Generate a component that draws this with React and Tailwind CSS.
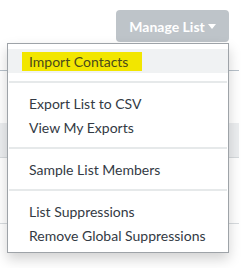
import React from 'react'

const groups = [
  ['Import Contacts'],
  ['Export List to CSV', 'View My Exports'],
  ['Sample List Members'],
  ['List Suppressions', 'Remove Global Suppressions'],
]

function Caret() {
  return (
    <svg width="8" height="5" viewBox="0 0 8 5" className="ml-[3px] mt-[1px]" aria-hidden="true">
      <path d="M0 0h8L4 5z" fill="currentColor" />
    </svg>
  )
}

export default function App() {
  return (
    <div
      className="relative w-[241px] h-[268px] bg-white overflow-hidden"
      style={{ fontFamily: 'Lato, "Open Sans", sans-serif' }}
    >
      <div className="flex justify-end pt-[10px] pr-[12px]">
        <button className="flex items-center justify-center w-[113px] h-[32px] rounded-[4px] bg-[#bec4c9] text-white text-[14px] font-bold">
          Manage List
          <Caret />
        </button>
      </div>

      {/* table rows behind the menu */}
      <div className="mt-[28px] mr-[2px]">
        <div className="h-px bg-[#b7c1ca]" />
        <div className="h-[52px]" />
        <div className="h-[35px] bg-[#eceef0] border-b border-[#d6dadd]" />
        <div className="h-[65px]" />
        <div className="h-px bg-[#d8dcdf]" />
      </div>

      <div className="absolute left-[7px] top-[43px] w-[222px] bg-white border border-[#9ea3a8] shadow-[0_6px_12px_rgba(0,0,0,0.18)] py-[5px] text-[14px] text-[#333a44]">
        {groups.map((items, gi) => (
          <div key={gi}>
            {gi > 0 && <div className="h-[2px] mx-[1px] my-[8px] bg-[#e6e9ea]" />}
            {items.map((label) =>
              label === 'Import Contacts' ? (
                <div key={label} className="h-[24px] flex items-center pl-[14px] bg-[#f0f2f3]">
                  <span className="inline-flex items-center h-[19px] pl-[7px] pr-[14px] bg-[#f2e600] text-[#4a4a1c]">
                    {label}
                  </span>
                </div>
              ) : (
                <div key={label} className="h-[24px] flex items-center pl-[21px]">
                  {label}
                </div>
              )
            )}
          </div>
        ))}
      </div>
    </div>
  )
}
